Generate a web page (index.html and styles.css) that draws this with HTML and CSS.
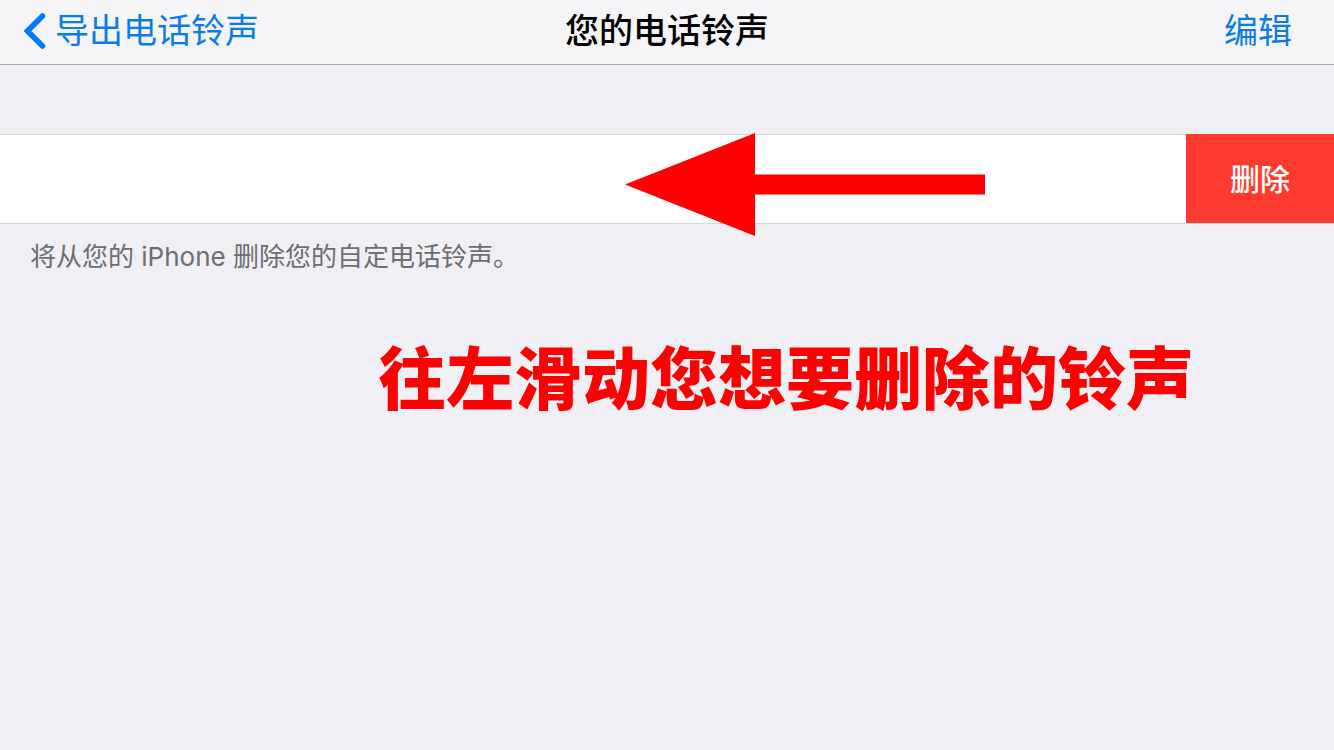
FILE: index.html
```html
<!DOCTYPE html>
<html lang="zh-CN">
<head>
    <meta charset="UTF-8">
    <meta name="viewport" content="width=device-width, initial-scale=1.0">
    <title>您的电话铃声</title>
    <link rel="stylesheet" href="styles.css">
</head>
<body>

<header class="navbar">
    <a class="back" href="#">
        <svg class="back-icon" width="22" height="36" viewBox="0 0 22 36" aria-hidden="true">
            <path d="M18.500 3 L3.500 18 L18.500 33" fill="none" stroke="#007aff" stroke-width="5.500" stroke-linecap="round" stroke-linejoin="miter"/>
        </svg>
        <span>导出电话铃声</span>
    </a>
    <h1 class="title">您的电话铃声</h1>
    <button class="edit" type="button">编辑</button>
</header>

<main>
    <div class="row">
        <div class="row-content"></div>
        <button class="delete" type="button">删除</button>
        <svg class="arrow" width="360" height="103" viewBox="0 0 360 103" aria-hidden="true">
            <path d="M0 51.500 L130 0 V41.500 H360 V61.500 H130 V103 Z" fill="#ff0000"/>
        </svg>
    </div>
    <p class="note">将从您的 iPhone 删除您的自定电话铃声。</p>
    <p class="hint">往左滑动您想要删除的铃声</p>
</main>

</body>
</html>
```

FILE: styles.css
```css
body {
    margin: 0;
    background-color: #efeff4;
    font-family: Inter, "Noto Sans CJK SC", sans-serif;
}
button {
    padding: 0;
    border: none;
    font-family: inherit;
    cursor: pointer;
}
.navbar {
    display: grid;
    grid-template-columns: 1fr auto 1fr;
    align-items: center;
    height: 62px;
    padding-bottom: 2px;
    border-bottom: 1px solid #a7a7ab;
    background-color: #f5f5f7;
    font-size: 34px;
    line-height: 48px;
}
.back {
    display: flex;
    align-items: center;
    gap: 9px;
    padding-left: 24px;
    color: #0a7be8;
    text-decoration: none;
}
.title {
    margin: 0;
    font-size: 34px;
    font-weight: 500;
    color: #000;
}
.edit {
    justify-self: end;
    margin-right: 42px;
    background: none;
    color: #0a7be8;
    font-size: 34px;
    line-height: 48px;
}
.row {
    position: relative;
    display: flex;
    height: 90px;
    margin-top: 69px;
}
.row-content {
    flex: 1;
    border-top: 1px solid #d9d9dc;
    border-bottom: 1px solid #d9d9dc;
    background-color: #fff;
}
.delete {
    width: 148px;
    padding-bottom: 4px;
    border-bottom: 1px solid #d9d9dc;
    background-color: #ff3b30;
    background-clip: padding-box;
    color: #fff;
    font-size: 30px;
    font-weight: 500;
}
.arrow {
    position: absolute;
    top: -1px;
    left: 625px;
}
.note {
    margin: 15px 30px 0;
    color: #6d6d72;
    font-size: 26px;
    line-height: 36px;
}
.hint {
    margin: 54px 0 0 378px;
    color: #ff0000;
    font-size: 68px;
    font-weight: 900;
    line-height: 100px;
}
```
